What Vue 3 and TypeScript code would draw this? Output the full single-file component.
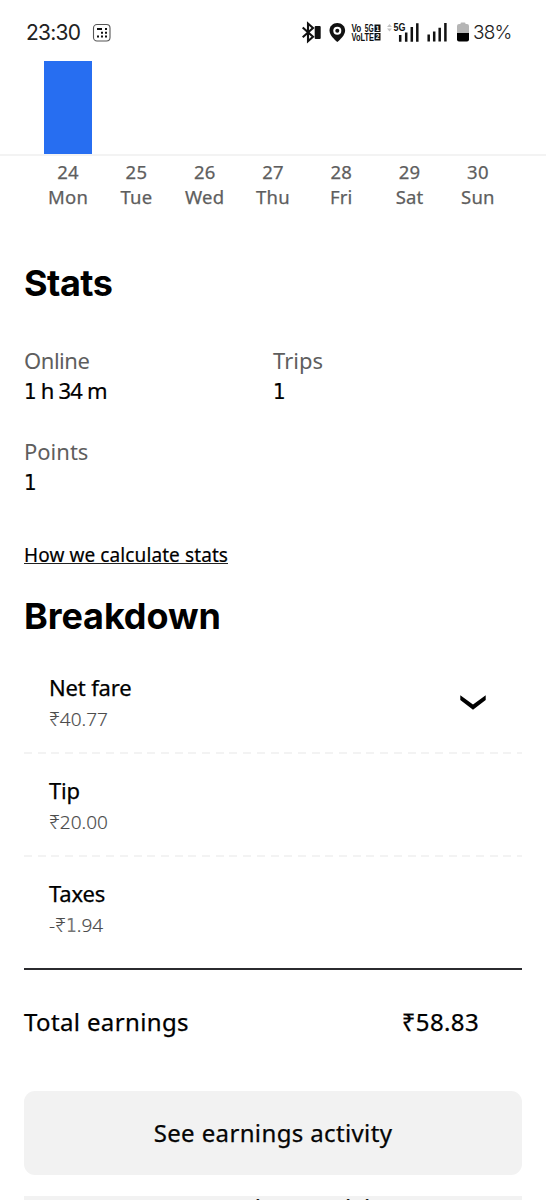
<script setup lang="ts">
interface Day { date: number; name: string; height: number }
interface Fare { label: string; value: string; key: string; expandable?: boolean }

const days: Day[] = [
  { date: 24, name: 'Mon', height: 93 },
  { date: 25, name: 'Tue', height: 0 },
  { date: 26, name: 'Wed', height: 0 },
  { date: 27, name: 'Thu', height: 0 },
  { date: 28, name: 'Fri', height: 0 },
  { date: 29, name: 'Sat', height: 0 },
  { date: 30, name: 'Sun', height: 0 },
]

const stats = [
  { label: 'Online', value: '1 h 34 m', key: 'online' },
  { label: 'Trips', value: '1', key: 'trips' },
  { label: 'Points', value: '1', key: 'points' },
]

const fares: Fare[] = [
  { label: 'Net fare', value: '₹40.77', key: 'net-fare', expandable: true },
  { label: 'Tip', value: '₹20.00', key: 'tip' },
  { label: 'Taxes', value: '-₹1.94', key: 'taxes' },
]

// Splits a value so the digit one can take a face with a foot serif.
const pieces = (value: string): string[] => value.split(/(1)/).filter((p) => p !== '')
</script>

<template>
  <main class="screen">
    <header class="status">
      <span class="clock">23:30</span>
      <svg class="app-icon" width="20" height="20" viewBox="0 0 20 20">
        <rect x="1.500" y="1.500" width="16.500" height="16.500" rx="3.500" fill="none" stroke="#555" stroke-width="1.100" />
        <path d="M5 6h5M9 9.800h2M13 6h2M13 9.800h2M5 13.500h2M9 13.500h2M13 13.500h2" fill="none" stroke="#111" stroke-width="1.900" />
      </svg>
      <svg class="tray" width="172" height="24" viewBox="300 20 172 24">
        <path d="M302.700 27.500L313 36.800L308 41.200V23.500L313 28L302.700 37.200" fill="none" stroke="#111" stroke-width="2.100" />
        <rect x="314.700" y="26" width="6" height="13" rx="1" fill="#111" />
        <path d="M337.300 23c-4.400 0-7.800 3.300-7.800 7.500c0 4.500 4.600 8.800 7.800 11.500c3.200-2.700 7.800-7 7.800-11.500c0-4.200-3.400-7.500-7.800-7.500z" fill="#111" />
        <circle cx="337.300" cy="30.700" r="4" fill="#fff" />
        <circle cx="337.300" cy="30.700" r="2" fill="#111" />
        <g class="volte">
          <text x="351.500" y="31.900" textLength="9.800" lengthAdjust="spacingAndGlyphs">Vo</text>
          <text x="364.800" y="31.900" textLength="9" lengthAdjust="spacingAndGlyphs">5G</text>
          <text x="351.500" y="40.500" textLength="22.500" lengthAdjust="spacingAndGlyphs">VoLTE</text>
          <rect x="374.500" y="24.500" width="6" height="7.500" fill="#111" />
          <rect x="374.500" y="33" width="6" height="7.500" fill="#111" />
          <text class="sim" x="375.700" y="30.700">1</text>
          <text class="sim" x="375.700" y="39.200">2</text>
        </g>
        <path d="M387 27l2.500-3l2.500 3zM387 28.500l2.500 3l2.500-3z" fill="#c4c4c4" />
        <text class="five-g" x="393.500" y="31.200" textLength="12" lengthAdjust="spacingAndGlyphs">5G</text>
        <path d="M400.200 35v6.800M406.200 32.500v9.300M411.800 27v14.800M417.300 23.200v18.600" stroke="#111" stroke-width="2.500" />
        <path d="M428.700 34.500v7.100M434.200 31.600v10M439.700 27.700v13.900M445.400 23v18.600" stroke="#111" stroke-width="2.500" />
        <path d="M457 33v-7q0-2 2-2h1.500v-.5q0-1 1-1h3q1 0 1 1v.5h1.500q2 0 2 2v7z" fill="#b5b5b5" />
        <path d="M457 33h12v6.500q0 2-2 2h-8q-2 0-2-2z" fill="#000" />
      </svg>
      <span class="percent">38%</span>
    </header>

    <section class="chart">
      <div class="bars">
        <div v-for="d in days" :key="d.date" class="slot">
          <div v-if="d.height" class="bar" :style="{ height: d.height + 'px' }"></div>
        </div>
      </div>
      <div class="axis">
        <div v-for="d in days" :key="d.date" class="tick">
          <span class="date">{{ d.date }}</span>
          <span>{{ d.name }}</span>
        </div>
      </div>
    </section>

    <section class="stats">
      <h2 class="stats-title">Stats</h2>
      <dl class="grid">
        <div v-for="s in stats" :key="s.key" class="stat">
          <dt :class="s.key">{{ s.label }}</dt>
          <dd><span v-for="(p, i) in pieces(s.value)" :key="i" :class="{ one: p === '1' }">{{ p }}</span></dd>
        </div>
      </dl>
      <a class="link">How we calculate stats</a>
    </section>

    <section class="breakdown">
      <h2 class="breakdown-title">Breakdown</h2>
      <div v-for="f in fares" :key="f.key" class="fare">
        <div>
          <div class="fare-label">{{ f.label }}</div>
          <div class="fare-value"><span v-for="(p, i) in pieces(f.value)" :key="i" :class="{ one: p === '1' }">{{ p }}</span></div>
        </div>
        <svg v-if="f.expandable" class="chevron" width="28" height="18" viewBox="0 0 28 18">
          <path d="M1.300 1.300L14 10.500L26.700 1.300V6L14 15.700L1.300 6z" fill="#000" />
        </svg>
      </div>
      <div class="total">
        <span>Total earnings</span>
        <span>₹58.83</span>
      </div>
    </section>

    <button class="activity">See earnings activity</button>
    <div class="next">See earnings activity</div>
  </main>
</template>

<style>
body { margin: 0; background: #fff; }
</style>

<style scoped>
.screen { width: 546px; height: 1200px; overflow: hidden; background: #fff; color: #050505; font-family: "Noto Sans", sans-serif; display: flex; flex-direction: column; }
.status { height: 61px; flex: none; display: flex; align-items: flex-start; box-sizing: border-box; padding: 20px 0 0 26px; font-family: Inter, sans-serif; color: #222; }
.clock { width: 66px; font-size: 21px; line-height: 26px; letter-spacing: -0.75px; }
.app-icon { margin-top: 3px; }
.tray { margin-left: 188px; }
.percent { margin-left: 1px; font-size: 19px; line-height: 26px; font-weight: 300; letter-spacing: -0.8px; white-space: nowrap; }
.volte { font-family: "Liberation Sans", sans-serif; font-size: 10.4px; font-weight: 700; fill: #111; }
.volte .sim { font-size: 6.5px; fill: #fff; }
.five-g { font-family: "Liberation Sans", sans-serif; font-size: 11.5px; font-weight: 700; fill: #111; }

.chart { height: 154px; flex: none; }
.bars { height: 93px; border-bottom: 2px solid #f3f3f3; display: grid; grid-template-columns: repeat(7, 68.3px); justify-content: center; }
.slot { display: flex; align-items: flex-end; justify-content: center; }
.bar { width: 48px; background: #276ef1; }
.axis { display: grid; grid-template-columns: repeat(7, 68.3px); justify-content: center; padding-top: 3px; }
.tick { display: flex; flex-direction: column; align-items: center; font-size: 18.5px; line-height: 25px; letter-spacing: 0.2px; color: #5e5e5e; -webkit-text-stroke: 0.25px #5e5e5e; }

.stats { padding: 0 24px; flex: none; height: 376px; box-sizing: border-box; }
h2 { margin: 0; font-family: Inter, sans-serif; font-weight: 700; font-size: 36px; line-height: 44px; color: #000; }
.stats-title { padding-top: 46px; letter-spacing: -0.5px; }
.grid { margin: 40px 0 0; display: grid; grid-template-columns: 249px 249px; row-gap: 31px; font-size: 22px; line-height: 30px; }
dt { color: #5e5e5e; }
dt.online { letter-spacing: -0.45px; }
dd { margin: 0; white-space: pre; color: #000; letter-spacing: -0.8px; -webkit-text-stroke: 0.2px #000; }
.one { font-family: "DejaVu Sans Condensed", "DejaVu Sans", sans-serif; font-stretch: condensed; line-height: 1; }
.link { display: inline-block; margin-top: 48px; font-size: 19px; line-height: 22px; height: 19px; letter-spacing: 0.1px; border-bottom: 1.5px solid #222; color: #000; -webkit-text-stroke: 0.2px #000; }

.breakdown { padding: 0 24px; flex: none; height: 500px; box-sizing: border-box; }
.breakdown-title { padding-top: 3px; letter-spacing: -0.1px; }
.fare { height: 103px; box-sizing: border-box; padding: 21px 35px 0 25px; display: flex; justify-content: space-between; background: repeating-linear-gradient(90deg, #f3f3f3 0 8px, transparent 8px 13.7px) bottom / 100% 2px no-repeat; }
.fare:first-of-type { height: 116px; padding-top: 34px; }
.fare-label { font-size: 22px; line-height: 30px; letter-spacing: -0.15px; color: #000; -webkit-text-stroke: 0.25px #000; }
.fare-value { font-size: 19px; line-height: 34px; color: #4c4c4c; font-weight: 300; -webkit-text-stroke: 0.15px #4c4c4c; }
.fare-value .one { color: #777; -webkit-text-stroke: 0; }
.chevron { margin-top: 22px; }
.total { display: flex; justify-content: space-between; padding: 34px 43px 0 0; font-size: 24px; line-height: 36px; letter-spacing: 0.37px; color: #000; -webkit-text-stroke: 0.25px #000; }
.fare:nth-last-child(2) { background: none; border-bottom: 2px solid #2b2b2f; height: 113px; }

.activity { flex: none; margin: 0 24px; height: 84px; border: 0; border-radius: 11px; background: #f2f2f2; font: 400 24px/84px "Noto Sans", sans-serif; letter-spacing: 0.37px; color: #050505; -webkit-text-stroke: 0.25px #050505; padding: 0; }
.next { flex: none; margin: 21px 24px 0; height: 60px; background: #f2f2f2; text-align: center; font-size: 24px; line-height: 23px; letter-spacing: 0.37px; -webkit-text-stroke: 0.25px #050505; }
</style>
